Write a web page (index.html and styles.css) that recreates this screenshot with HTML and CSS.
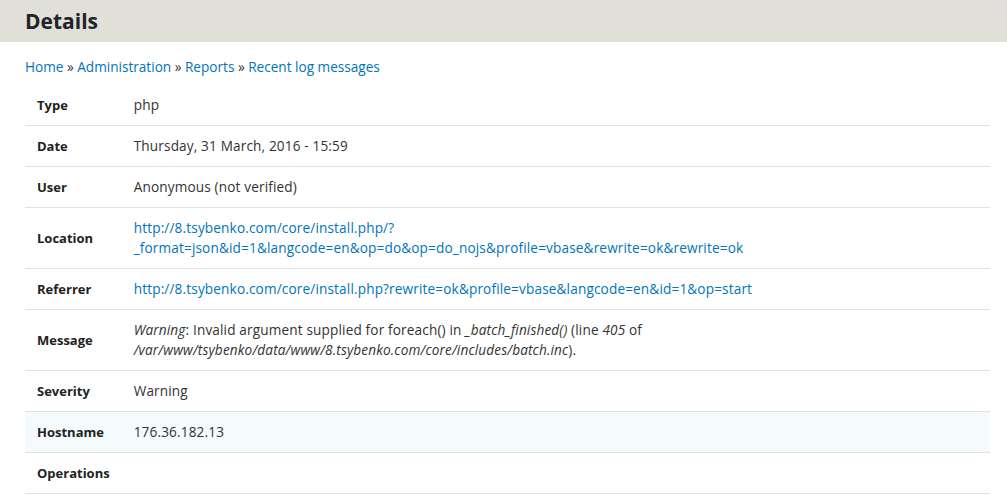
FILE: index.html
```html
<!DOCTYPE html>
<html>
<head>
<meta charset="utf-8">
<link rel="stylesheet" href="styles.css">
</head>
<body>
<header class="page-head"><h1 class="title">Details</h1></header>
<main class="content">
  <nav class="breadcrumb"><a href="#">Home</a> » <a href="#">Administration</a> » <a href="#">Reports</a> » <a href="#">Recent log messages</a></nav>
  <table class="details">
    <tr><th>Type</th><td>php</td></tr>
    <tr><th>Date</th><td>Thursday, 31 March, 2016 - 15:59</td></tr>
    <tr><th>User</th><td>Anonymous (not verified)</td></tr>
    <tr><th>Location</th><td><a href="#">http://8.tsybenko.com/core/install.php/?<br>_format=json&amp;id=1&amp;langcode=en&amp;op=do&amp;op=do_nojs&amp;profile=vbase&amp;rewrite=ok&amp;rewrite=ok</a></td></tr>
    <tr><th>Referrer</th><td><a href="#">http://8.tsybenko.com/core/install.php?rewrite=ok&amp;profile=vbase&amp;langcode=en&amp;id=1&amp;op=start</a></td></tr>
    <tr><th>Message</th><td><em>Warning</em>: Invalid argument supplied for foreach() in <em>_batch_finished()</em> (line <em>405</em> of<br><em>/var/www/tsybenko/data/www/8.tsybenko.com/core/includes/batch.inc</em>).</td></tr>
    <tr><th>Severity</th><td>Warning</td></tr>
    <tr class="hover"><th>Hostname</th><td>176.36.182.13</td></tr>
    <tr><th>Operations</th><td></td></tr>
  </table>
</main>
</body>
</html>
```
FILE: styles.css
```css
html, body {
  margin: 0;
  padding: 0;
  background: #fff;
  color: #333;
  font-family: "Open Sans", "DejaVu Sans", sans-serif;
  font-size: 13.6px;
  line-height: 20px;
}
a { color: #0074bd; text-decoration: none; }
.page-head {
  background: #e0e0d8;
  height: 42px;
  display: flex;
  align-items: center;
  padding: 0 25px;
}
.title {
  margin: 0;
  font-size: 21px;
  font-weight: bold;
  color: #232429;
  line-height: 1;
}
.content {
  padding: 0 17px 0 25px;
}
.breadcrumb {
  padding-top: 15px;
  height: 28px;
  color: #333;
}
.details {
  width: 100%;
  border-collapse: collapse;
}
.details th, .details td {
  padding: 10px 12px;
  border-bottom: 1px solid #e2e2de;
  text-align: left;
  vertical-align: middle;
}
.details th {
  width: 72px;
  font-weight: bold;
  font-size: 13px;
  color: #222;
}
.details td { letter-spacing: 0.15px; }
.details tr.hover { background: #f5fbfd; }
```
